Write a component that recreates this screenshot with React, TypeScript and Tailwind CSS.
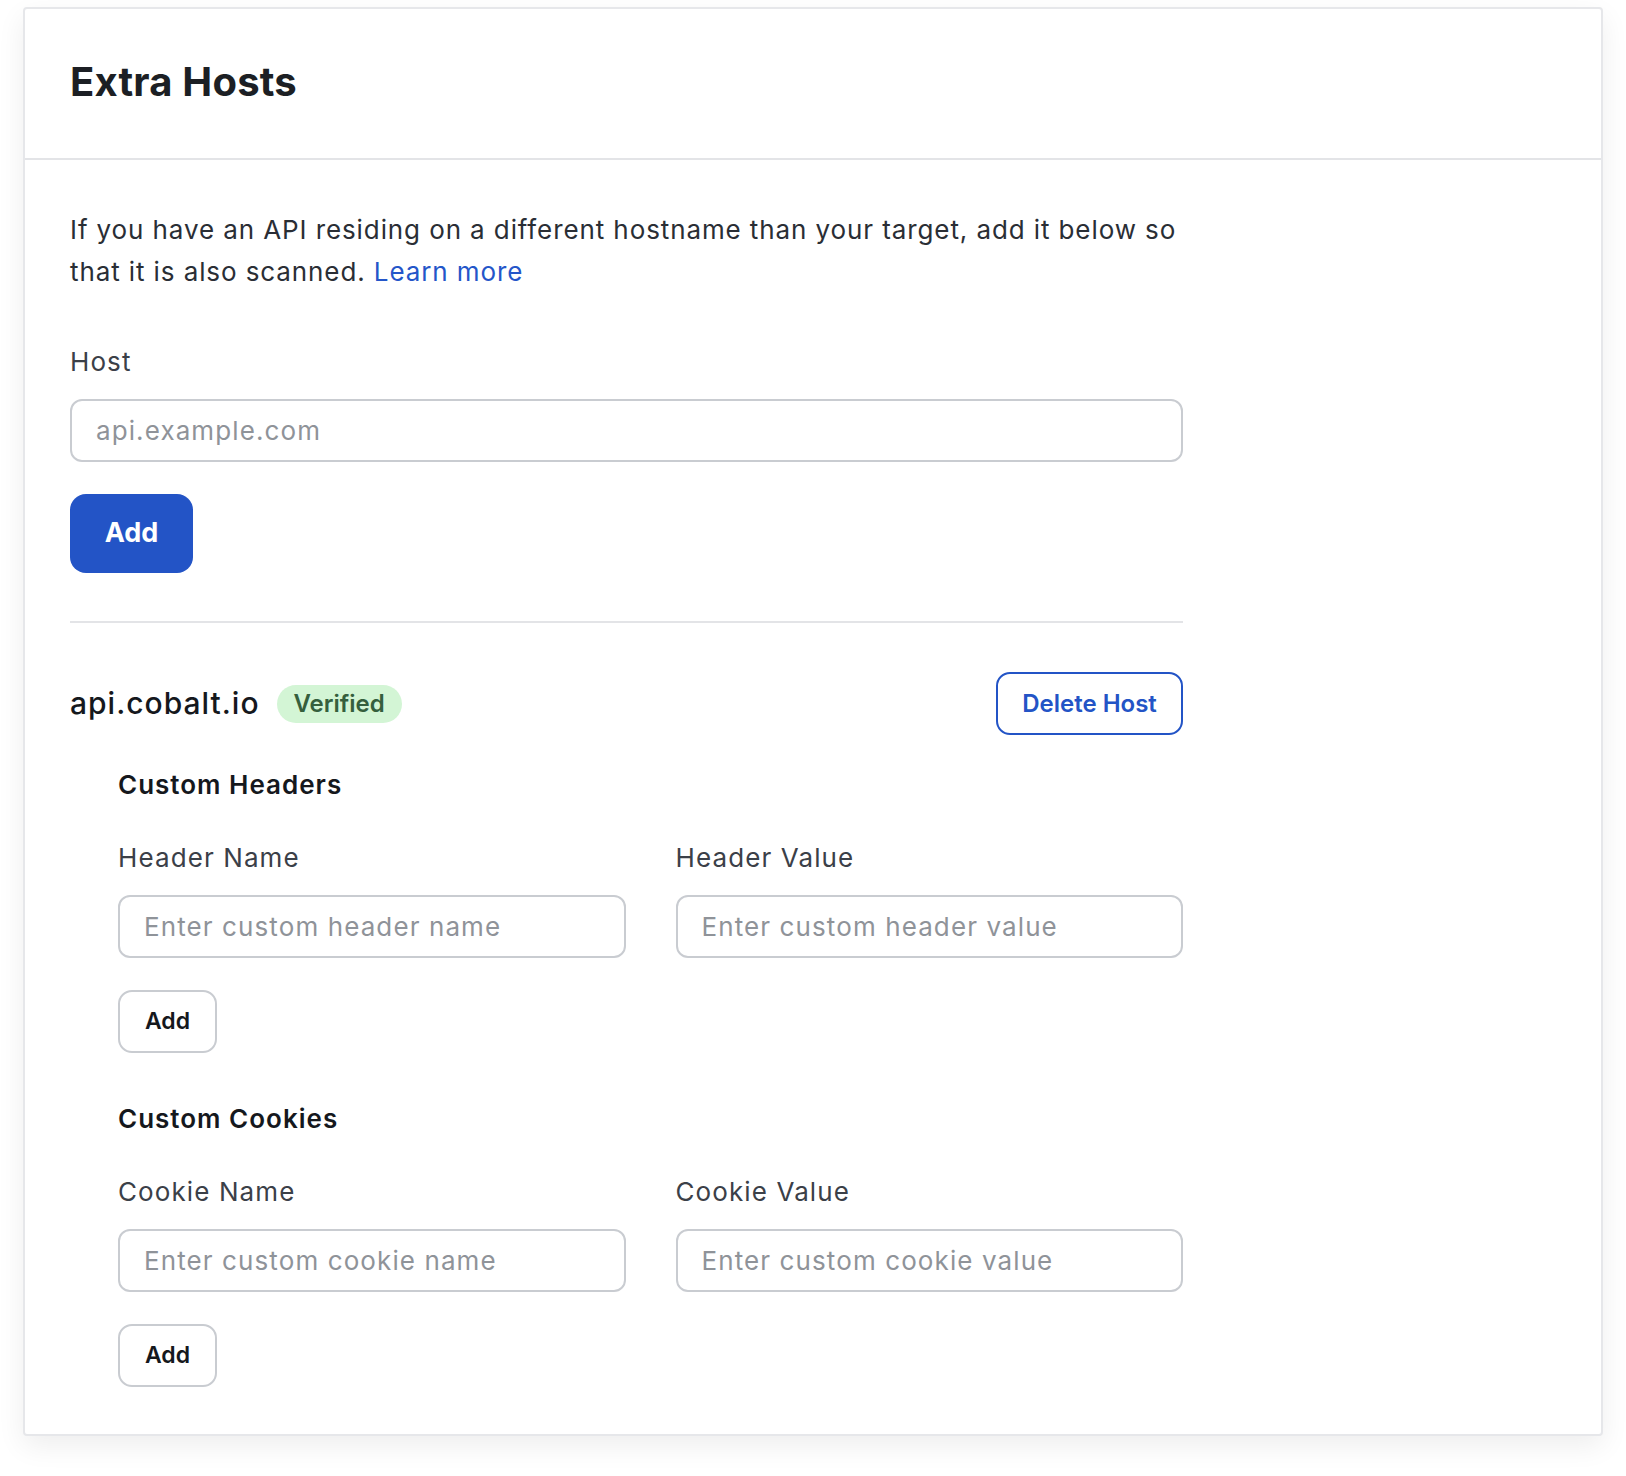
const font = { fontFamily: "Inter, 'Noto Sans', sans-serif" };

const Field = ({ label, placeholder }: { label: string; placeholder: string }) => {
  return (
    <div className="flex flex-col">
      <label className="text-[26px] leading-[36px] tracking-[1.1px] text-[#3b4048]">{label}</label>
      <input
        placeholder={placeholder}
        className="mt-[19px] h-[63px] w-full rounded-[12px] border-2 border-[#c9ccd1] bg-white px-[24px] text-[26px] tracking-[1.1px] text-[#1f2329] outline-none placeholder:text-[#8f9399]"
      />
    </div>
  );
};

const SmallAdd = () => (
  <button className="mt-[32px] h-[63px] w-[99px] rounded-[14px] border-2 border-[#c9ccd1] bg-white text-[23px] font-semibold text-[#15181d]">
    Add
  </button>
);

const PairSection = ({
  title,
  left,
  right,
}: {
  title: string;
  left: [string, string];
  right: [string, string];
}) => (
  <div className="flex flex-col">
    <h3 className="text-[26px] leading-[36px] font-semibold tracking-[1px] text-[#15181d]">{title}</h3>
    <div className="mt-[37px] grid grid-cols-2 gap-[50px]">
      <Field label={left[0]} placeholder={left[1]} />
      <Field label={right[0]} placeholder={right[1]} />
    </div>
    <div>
      <SmallAdd />
    </div>
  </div>
);

export default function App() {
  return (
    <div className="min-h-screen bg-white pl-[23px] pr-[23px] pt-[7px]" style={font}>
      <div className="w-[1580px] rounded-[4px] border-2 border-[#e6e7ea] bg-white shadow-[0_10px_28px_rgba(0,0,0,0.07)]">
        {/* header */}
        <div className="flex h-[151px] items-center border-b-2 border-[#e3e4e7] px-[45px] pb-[4px]">
          <h1 className="text-[40px] font-bold tracking-[0.2px] text-[#1c1f24]">Extra Hosts</h1>
        </div>

        {/* body */}
        <div className="px-[45px] pt-[49px] pb-[47px]">
          <div className="w-[1113px]">
            <p className="w-[1150px] text-[26px] leading-[42px] tracking-[0.9px] text-[#2a2e35]">
              If you have an API residing on a different hostname than your target, add it below so
              <br />
              that it is also scanned. <a className="text-[#2456c9]">Learn more</a>
            </p>

            <div className="mt-[51px]">
              <Field label="Host" placeholder="api.example.com" />
            </div>
            <button className="mt-[32px] h-[79px] w-[123px] rounded-[16px] bg-[#2354c6] text-[27px] font-bold text-white">
              Add
            </button>

            <div className="mt-[48px] border-t-2 border-[#e3e4e7]" />

            {/* host row */}
            <div className="mt-[49px] flex items-center justify-between">
              <div className="flex items-center gap-[17px]">
                <span className="text-[30px] font-medium tracking-[1px] text-[#15181d]">api.cobalt.io</span>
                <span className="flex h-[38px] items-center rounded-[19px] bg-[#d3f5d5] px-[17px] text-[24px] font-semibold text-[#355f3d]">
                  Verified
                </span>
              </div>
              <button className="h-[63px] w-[187px] rounded-[14px] border-2 border-[#2354c6] bg-white text-[24px] font-semibold text-[#2354c6]">
                Delete Host
              </button>
            </div>

            <div className="pl-[48px]">
              <div className="mt-[32px]">
                <PairSection
                  title="Custom Headers"
                  left={["Header Name", "Enter custom header name"]}
                  right={["Header Value", "Enter custom header value"]}
                />
              </div>
              <div className="mt-[48px]">
                <PairSection
                  title="Custom Cookies"
                  left={["Cookie Name", "Enter custom cookie name"]}
                  right={["Cookie Value", "Enter custom cookie value"]}
                />
              </div>
            </div>
          </div>
        </div>
      </div>
    </div>
  );
}
